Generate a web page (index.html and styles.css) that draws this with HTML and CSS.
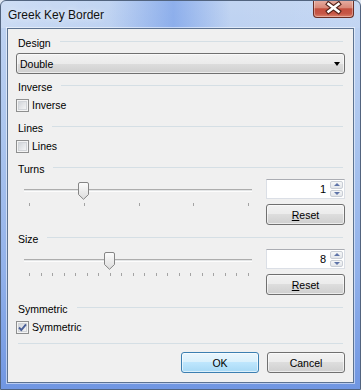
FILE: index.html
```html
<!DOCTYPE html>
<html lang="en">

<head>
    <meta charset="UTF-8">
    <title>Greek Key Border</title>
    <link rel="stylesheet" href="styles.css">
</head>

<body>
    <div class="window">
        <div class="titlebar">
            <span class="title">Greek Key Border</span>
            <div class="close-btn">
                <svg width="39" height="16" viewBox="0 0 39 16">
                    <path d="M14.5 4 L24.5 11.5 M24.5 4 L14.5 11.5" stroke="#55241c" stroke-width="4.8" stroke-linecap="square" />
                    <path d="M14.5 4 L24.5 11.5 M24.5 4 L14.5 11.5" stroke="#fff" stroke-width="2.6" stroke-linecap="square" />
                </svg>
            </div>
        </div>

        <div class="client">
            <!-- Design -->
            <div class="group-head"><span>Design</span><i class="line"></i></div>
            <div class="combo"><span>Double</span><span class="combo-arrow"></span></div>

            <!-- Inverse -->
            <div class="group-head"><span>Inverse</span><i class="line"></i></div>
            <label class="check-row"><span class="box"></span>Inverse</label>

            <!-- Lines -->
            <div class="group-head"><span>Lines</span><i class="line"></i></div>
            <label class="check-row"><span class="box"></span>Lines</label>

            <!-- Turns -->
            <div class="group-head"><span>Turns</span><i class="line"></i></div>
            <div class="slider-row">
                <div class="slider">
                    <div class="track"></div>
                    <div class="ticks">
                        <i></i><i></i><i></i><i></i><i></i>
                    </div>
                    <svg class="thumb" style="left: 62px" width="11" height="18" viewBox="0 0 11 18">
                        <defs>
                            <linearGradient id="tg1" x1="0" y1="0" x2="0" y2="1">
                                <stop offset="0" stop-color="#fdfdfd" />
                                <stop offset="1" stop-color="#dcdcdc" />
                            </linearGradient>
                        </defs>
                        <path d="M2 0.5 H9 Q10.5 0.5 10.5 2 V12.5 L5.5 17.3 L0.5 12.5 V2 Q0.5 0.5 2 0.5 Z" fill="url(#tg1)" stroke="#858585" />
                    </svg>
                </div>
                <div class="side">
                    <div class="spin">
                        <span class="spin-value">1</span>
                        <div class="spin-btns">
                            <span class="spin-up"></span>
                            <span class="spin-down"></span>
                        </div>
                    </div>
                    <button class="btn"><u>R</u>eset</button>
                </div>
            </div>

            <!-- Size -->
            <div class="group-head"><span>Size</span><i class="line"></i></div>
            <div class="slider-row">
                <div class="slider">
                    <div class="track"></div>
                    <div class="ticks">
                        <i></i><i></i><i></i><i></i><i></i><i></i><i></i><i></i><i></i><i></i>
                        <i></i><i></i><i></i><i></i><i></i><i></i><i></i><i></i><i></i><i></i>
                    </div>
                    <svg class="thumb" style="left: 88px" width="11" height="18" viewBox="0 0 11 18">
                        <defs>
                            <linearGradient id="tg2" x1="0" y1="0" x2="0" y2="1">
                                <stop offset="0" stop-color="#fdfdfd" />
                                <stop offset="1" stop-color="#dcdcdc" />
                            </linearGradient>
                        </defs>
                        <path d="M2 0.5 H9 Q10.5 0.5 10.5 2 V12.5 L5.5 17.3 L0.5 12.5 V2 Q0.5 0.5 2 0.5 Z" fill="url(#tg2)" stroke="#858585" />
                    </svg>
                </div>
                <div class="side">
                    <div class="spin">
                        <span class="spin-value">8</span>
                        <div class="spin-btns">
                            <span class="spin-up"></span>
                            <span class="spin-down"></span>
                        </div>
                    </div>
                    <button class="btn"><u>R</u>eset</button>
                </div>
            </div>

            <!-- Symmetric -->
            <div class="group-head"><span>Symmetric</span><i class="line"></i></div>
            <label class="check-row">
                <span class="box checked">
                    <svg width="11" height="11" viewBox="0 0 11 11">
                        <path d="M2 5.5 L4.3 8 L9 2.3" fill="none" stroke="#4a5f97" stroke-width="1.9" />
                    </svg>
                </span>Symmetric
            </label>

            <div class="divider"></div>

            <div class="actions">
                <button class="btn btn-default">OK</button>
                <button class="btn">Cancel</button>
            </div>
        </div>
    </div>
</body>

</html>
```

FILE: styles.css
```css
* {
    box-sizing: border-box;
}

html {
    background: #dfe7f3;
}

body {
    margin: 0;
    font-family: "Liberation Sans", Arial, sans-serif;
    font-size: 10.5px;
    color: #000;
}

/* Ventana estilo Aero */
.window {
    width: 361px;
    height: 390px;
    display: flex;
    flex-direction: column;
    border: 1px solid #52647f;
    border-radius: 6px 6px 0 0;
    background: linear-gradient(to bottom, #c2d5f2 0%, #abc5ee 35%, #91b1ea 70%, #7096e2 100%);
    overflow: hidden;
}

.titlebar {
    height: 27px;
    display: flex;
    align-items: center;
    padding-left: 7px;
    background: linear-gradient(90deg, rgba(255, 255, 255, 0.2) 0%, rgba(255, 255, 255, 0) 30%, rgba(80, 130, 228, 0.45) 48%, rgba(255, 255, 255, 0) 64%, rgba(255, 255, 255, 0.08) 100%);
}

.title {
    font-size: 12px;
    color: #111;
    text-shadow: 0 0 6px rgba(255, 255, 255, 0.9);
}

.close-btn {
    margin-left: auto;
    margin-right: 6px;
    align-self: flex-start;
    margin-top: -1px;
    width: 41px;
    height: 18px;
    border: 1px solid #6a2d24;
    border-top: none;
    border-radius: 0 0 4px 4px;
    background: linear-gradient(to bottom, #e7b0a5 0%, #d98979 45%, #c44f3e 52%, #c65747 80%, #dc8069 100%);
    box-shadow: inset 0 0 0 1px rgba(255, 255, 255, 0.35);
}

.close-btn svg {
    display: block;
}

.client {
    flex: 1;
    margin: 0 6px 6px 6px;
    padding: 6px 8px 0 8px;
    background: #f0f0f0;
    border: 1px solid #5c7290;
    box-shadow: 0 0 0 1px rgba(255, 255, 255, 0.5);
}

/* Cabeçalho de grupo com linha */
.group-head {
    height: 16px;
    display: flex;
    align-items: center;
    padding: 0 2px;
    margin-top: 6px;
}

.group-head:first-child {
    margin-top: 0;
}

.combo + .group-head {
    margin-top: 5px;
}

.check-row + .group-head {
    margin-top: 7px;
}

.group-head .line {
    flex: 1;
    height: 1px;
    background: #d5dfe5;
    margin-left: 9px;
    align-self: flex-start;
    margin-top: 6px;
}

.combo {
    height: 21px;
    margin-top: 2px;
    display: flex;
    align-items: center;
    padding: 0 3px 0 3px;
    border: 1px solid #707070;
    border-radius: 3px;
    background: linear-gradient(to bottom, #f2f2f2 0%, #ebebeb 50%, #dddddd 50%, #cfcfcf 100%);
    box-shadow: inset 0 0 0 1px rgba(255, 255, 255, 0.6);
}

.combo-arrow {
    margin-left: auto;
    margin-right: 1px;
    width: 0;
    height: 0;
    border-left: 3.5px solid transparent;
    border-right: 3.5px solid transparent;
    border-top: 4px solid #000;
}

.check-row {
    height: 16px;
    margin-top: 2px;
    display: flex;
    align-items: center;
    gap: 3px;
}

.box {
    width: 13px;
    height: 13px;
    border: 1px solid #8e8f8f;
    background: linear-gradient(135deg, #c9cdd3 0%, #eeeff0 70%, #f7f7f7 100%);
    box-shadow: inset 0 0 0 1px #f4f4f4, inset 0 0 0 2px #d2d5d9;
}

.box.checked svg {
    display: block;
}

/* Trackbar */
.slider-row {
    height: 46px;
    margin-top: 2px;
    display: flex;
}

.slider {
    flex: 1;
    position: relative;
}

.track {
    position: absolute;
    left: 8px;
    top: 10px;
    width: 228px;
    height: 3px;
    border-top: 1px solid #adadad;
    border-bottom: 1px solid #fcfcfc;
    background: #e3e5e6;
}

.ticks {
    position: absolute;
    left: 13px;
    top: 24px;
    width: 220px;
    display: flex;
    justify-content: space-between;
}

.ticks i {
    width: 1px;
    height: 3px;
    background: #a3a3a3;
}

.thumb {
    position: absolute;
    top: 3px;
}

.side {
    width: 79px;
    display: flex;
    flex-direction: column;
    gap: 5px;
}

.spin {
    height: 20px;
    display: flex;
    align-items: center;
    background: #fff;
    border: 1px solid #dbdfe6;
    border-top-color: #abadb3;
}

.spin-value {
    flex: 1;
    text-align: right;
    padding-right: 4px;
    font-size: 11px;
}

.spin-btns {
    width: 13px;
    height: 16px;
    margin-right: 1px;
    display: flex;
    flex-direction: column;
    gap: 1px;
}

.spin-btns span {
    flex: 1;
    display: flex;
    align-items: center;
    justify-content: center;
    border: 1px solid #c9ced6;
    border-radius: 2px;
    background: linear-gradient(to bottom, #f6f7f8, #e3e6ea);
}

.spin-up::after,
.spin-down::after {
    content: "";
    width: 0;
    height: 0;
    border-left: 3px solid transparent;
    border-right: 3px solid transparent;
}

.spin-up::after {
    border-bottom: 3px solid #5f74a8;
}

.spin-down::after {
    border-top: 3px solid #5f74a8;
}

.btn {
    height: 21px;
    padding: 0;
    font: inherit;
    color: #000;
    border: 1px solid #707070;
    border-radius: 3px;
    background: linear-gradient(to bottom, #f2f2f2 0%, #ebebeb 50%, #dddddd 50%, #cfcfcf 100%);
    box-shadow: inset 0 0 0 1px rgba(255, 255, 255, 0.6);
}

.btn u {
    text-decoration: underline;
}

.btn-default {
    border-color: #3c7fb1;
    background: linear-gradient(to bottom, #eaf6fd 0%, #d9f0fc 50%, #bee6fd 50%, #a7d9f5 100%);
}

.divider {
    height: 1px;
    margin: 8px 2px 0 2px;
    background: #d5dfe5;
}

.actions {
    margin-top: 8px;
    display: flex;
    justify-content: flex-end;
    gap: 8px;
}

.actions .btn {
    width: 78px;
}
```
